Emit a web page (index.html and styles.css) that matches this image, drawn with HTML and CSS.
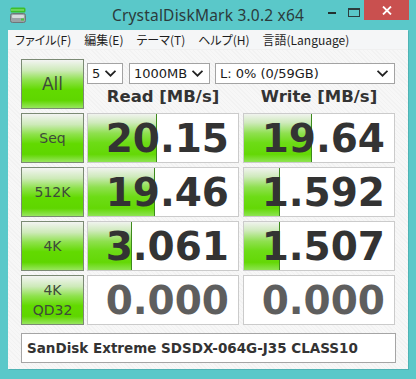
FILE: index.html
```html
<!DOCTYPE html>
<html lang="ja">
<head>
    <meta charset="UTF-8">
    <title>CrystalDiskMark 3.0.2 x64</title>
    <link rel="stylesheet" href="styles.css">
</head>
<body>

<div class="window">
    <div class="titlebar">
        <div class="tb-left">
            <svg class="app-icon" width="16" height="16" viewBox="0 0 16 16">
                <rect x="0.5" y="0.5" width="15" height="5" rx="1.5" fill="#3cbf2a"/>
                <rect x="1" y="2.5" width="13" height="1" fill="#9be88c"/>
                <rect x="0.5" y="6.5" width="15" height="9" rx="2" fill="#9aa3a6" stroke="#6d7679"/>
                <rect x="2" y="8" width="12" height="3" rx="1" fill="#d6dbdc"/>
                <rect x="11" y="11.5" width="3" height="2" fill="#4ac43a"/>
            </svg>
        </div>
        <div class="title">CrystalDiskMark 3.0.2 x64</div>
        <div class="tb-right">
            <div class="ctl ctl-min"><span></span></div>
            <div class="ctl ctl-max"><span></span></div>
            <div class="ctl ctl-close">
                <svg width="10" height="9" viewBox="0 0 10 9">
                    <path d="M1 0.5 L9 8.5 M9 0.5 L1 8.5" stroke="#fff" stroke-width="1.8"/>
                </svg>
            </div>
        </div>
    </div>

    <div class="frame">
        <div class="menubar">
            <span>ファイル(F)</span>
            <span>編集(E)</span>
            <span>テーマ(T)</span>
            <span>ヘルプ(H)</span>
            <span>言語(Language)</span>
        </div>

        <div class="content">
            <div class="grid">
                <div class="btn btn-all">All</div>
                <div class="top">
                    <div class="selects">
                        <div class="sel sel-count">5<svg viewBox="0 0 10 6"><polyline points="0.5,0.5 5,5 9.5,0.5"/></svg></div>
                        <div class="sel sel-size">1000MB<svg viewBox="0 0 10 6"><polyline points="0.5,0.5 5,5 9.5,0.5"/></svg></div>
                        <div class="sel sel-drive">L: 0% (0/59GB)<svg viewBox="0 0 10 6"><polyline points="0.5,0.5 5,5 9.5,0.5"/></svg></div>
                    </div>
                    <div class="heads">
                        <div>Read [MB/s]</div>
                        <div>Write [MB/s]</div>
                    </div>
                </div>

                <div class="btn">Seq</div>
                <div class="cell"><div class="bar" style="width: 69px"></div><span>20.15</span></div>
                <div class="cell"><div class="bar" style="width: 68px"></div><span>19.64</span></div>

                <div class="btn">512K</div>
                <div class="cell"><div class="bar" style="width: 67px"></div><span>19.46</span></div>
                <div class="cell"><div class="bar" style="width: 36px"></div><span>1.592</span></div>

                <div class="btn">4K</div>
                <div class="cell"><div class="bar" style="width: 44px"></div><span>3.061</span></div>
                <div class="cell"><div class="bar" style="width: 36px"></div><span>1.507</span></div>

                <div class="btn btn-qd">4K<br>QD32</div>
                <div class="cell zero"><span>0.000</span></div>
                <div class="cell zero"><span>0.000</span></div>
            </div>

            <div class="name">SanDisk Extreme SDSDX-064G-J35 CLASS10</div>
        </div>
    </div>
</div>

</body>
</html>
```

FILE: styles.css
```css
/* Global styles */
* {
    margin: 0;
    padding: 0;
    box-sizing: border-box;
}

body {
    width: 416px;
    height: 379px;
    background: #5ac8c9;
    overflow: hidden;
    font-family: 'DejaVu Sans', sans-serif;
}

.window {
    width: 416px;
    height: 379px;
}

/* Title bar */
.titlebar {
    height: 30px;
    display: grid;
    grid-template-columns: 1fr auto 1fr;
}

.tb-left {
    padding: 7px 0 0 10px;
}

.app-icon {
    display: block;
}

.title {
    font-family: 'Noto Sans', sans-serif;
    font-size: 15.5px;
    line-height: 30px;
    color: #2b3b3c;
    padding-bottom: 3px;
    letter-spacing: 0.2px;
}

.tb-right {
    display: flex;
    justify-content: flex-end;
    align-items: flex-start;
    padding-right: 7px;
}

.ctl {
    height: 20px;
    display: flex;
    align-items: center;
    justify-content: center;
}

.ctl-min {
    width: 25px;
}

.ctl-min span {
    width: 8px;
    height: 2px;
    margin-top: 6px;
    background: #23302f;
}

.ctl-max {
    width: 20px;
}

.ctl-max span {
    width: 12px;
    height: 9px;
    margin-top: 4px;
    border: 1px solid #2d3d3e;
    border-top-width: 2px;
}

.ctl-close {
    width: 45px;
    background: #c9504f;
}

.ctl-close svg {
    display: block;
}

/* Client area */
.frame {
    margin: 0 8px;
    height: 339px;
    background: #f6f6f6;
    box-shadow: 1px 1px 0 #4fb3b4;
}

.menubar {
    height: 20px;
    display: flex;
    gap: 13px;
    padding-left: 7px;
    background: #f5f6f7;
    font-family: 'Noto Sans CJK JP', sans-serif;
    font-feature-settings: "palt";
    font-size: 12px;
    line-height: 20px;
    color: #1e1e1e;
    border-bottom: 1px solid #f0f0f0;
}

.content {
    height: 319px;
    padding: 9px 0 0 13px;
    background: repeating-linear-gradient(45deg, #f7f7f7 0 2px, #f2f2f2 2px 3px);
}

.grid {
    display: grid;
    grid-template-columns: 66px 156px 152px;
    grid-auto-rows: 50px;
    row-gap: 4px;
}

.btn {
    width: 63px;
    border: 1px solid #7b8a74;
    background: linear-gradient(to bottom, #f3f4f2 0%, #cdeab8 22%, #8ee24c 42%, #62da00 62%, #5fd600 84%, #98e65e 100%);
    color: #3e4a3a;
    font-size: 14px;
    display: flex;
    align-items: center;
    justify-content: center;
    text-align: center;
}

.btn-all {
    font-size: 17px;
}

.btn-qd {
    line-height: 20px;
    font-size: 14px;
}

.top {
    grid-column: 2 / span 2;
}

.selects {
    display: flex;
    margin-top: 4px;
    height: 21px;
}

.sel {
    height: 21px;
    border: 1px solid #a3a3a3;
    background: #fff;
    font-family: 'DejaVu Sans', sans-serif;
    font-size: 13px;
    line-height: 19px;
    color: #1a1a1a;
    padding: 0 6px 0 4px;
    display: flex;
    justify-content: space-between;
    align-items: center;
}

.sel svg {
    width: 11px;
    height: 7px;
    fill: none;
    stroke: #222;
    stroke-width: 1.6;
}

.sel-count {
    width: 36px;
    margin-right: 6px;
}

.sel-size {
    width: 81px;
    margin-right: 5px;
}

.sel-drive {
    width: 180px;
}

.heads {
    display: grid;
    grid-template-columns: 156px 152px;
    height: 25px;
    font-weight: bold;
    font-size: 16.5px;
    line-height: 26px;
    color: #333;
}

.heads div {
    width: 152px;
    text-align: center;
}

.cell {
    width: 152px;
    position: relative;
    border: 1px solid #cbcbcb;
    background: #fff;
}

.bar {
    position: absolute;
    left: 0;
    top: 0;
    bottom: 0;
    border-right: 1px solid #3d8a1c;
    background: linear-gradient(to bottom, #f0f3ee 0%, #cfeabc 18%, #8fe050 40%, #6ddc16 60%, #64d806 84%, #8ee452 100%);
}

.cell span {
    position: relative;
    display: block;
    text-align: right;
    padding-right: 9px;
    font-size: 39px;
    font-weight: bold;
    line-height: 50px;
    color: #333;
}

.cell.zero span {
    color: #5e5e5e;
}

.name {
    margin-top: 8px;
    width: 375px;
    height: 30px;
    border: 1px solid #a5a5a5;
    background: #fff;
    padding-left: 5px;
    font-weight: bold;
    font-size: 13.5px;
    line-height: 28px;
    color: #333;
}
```
